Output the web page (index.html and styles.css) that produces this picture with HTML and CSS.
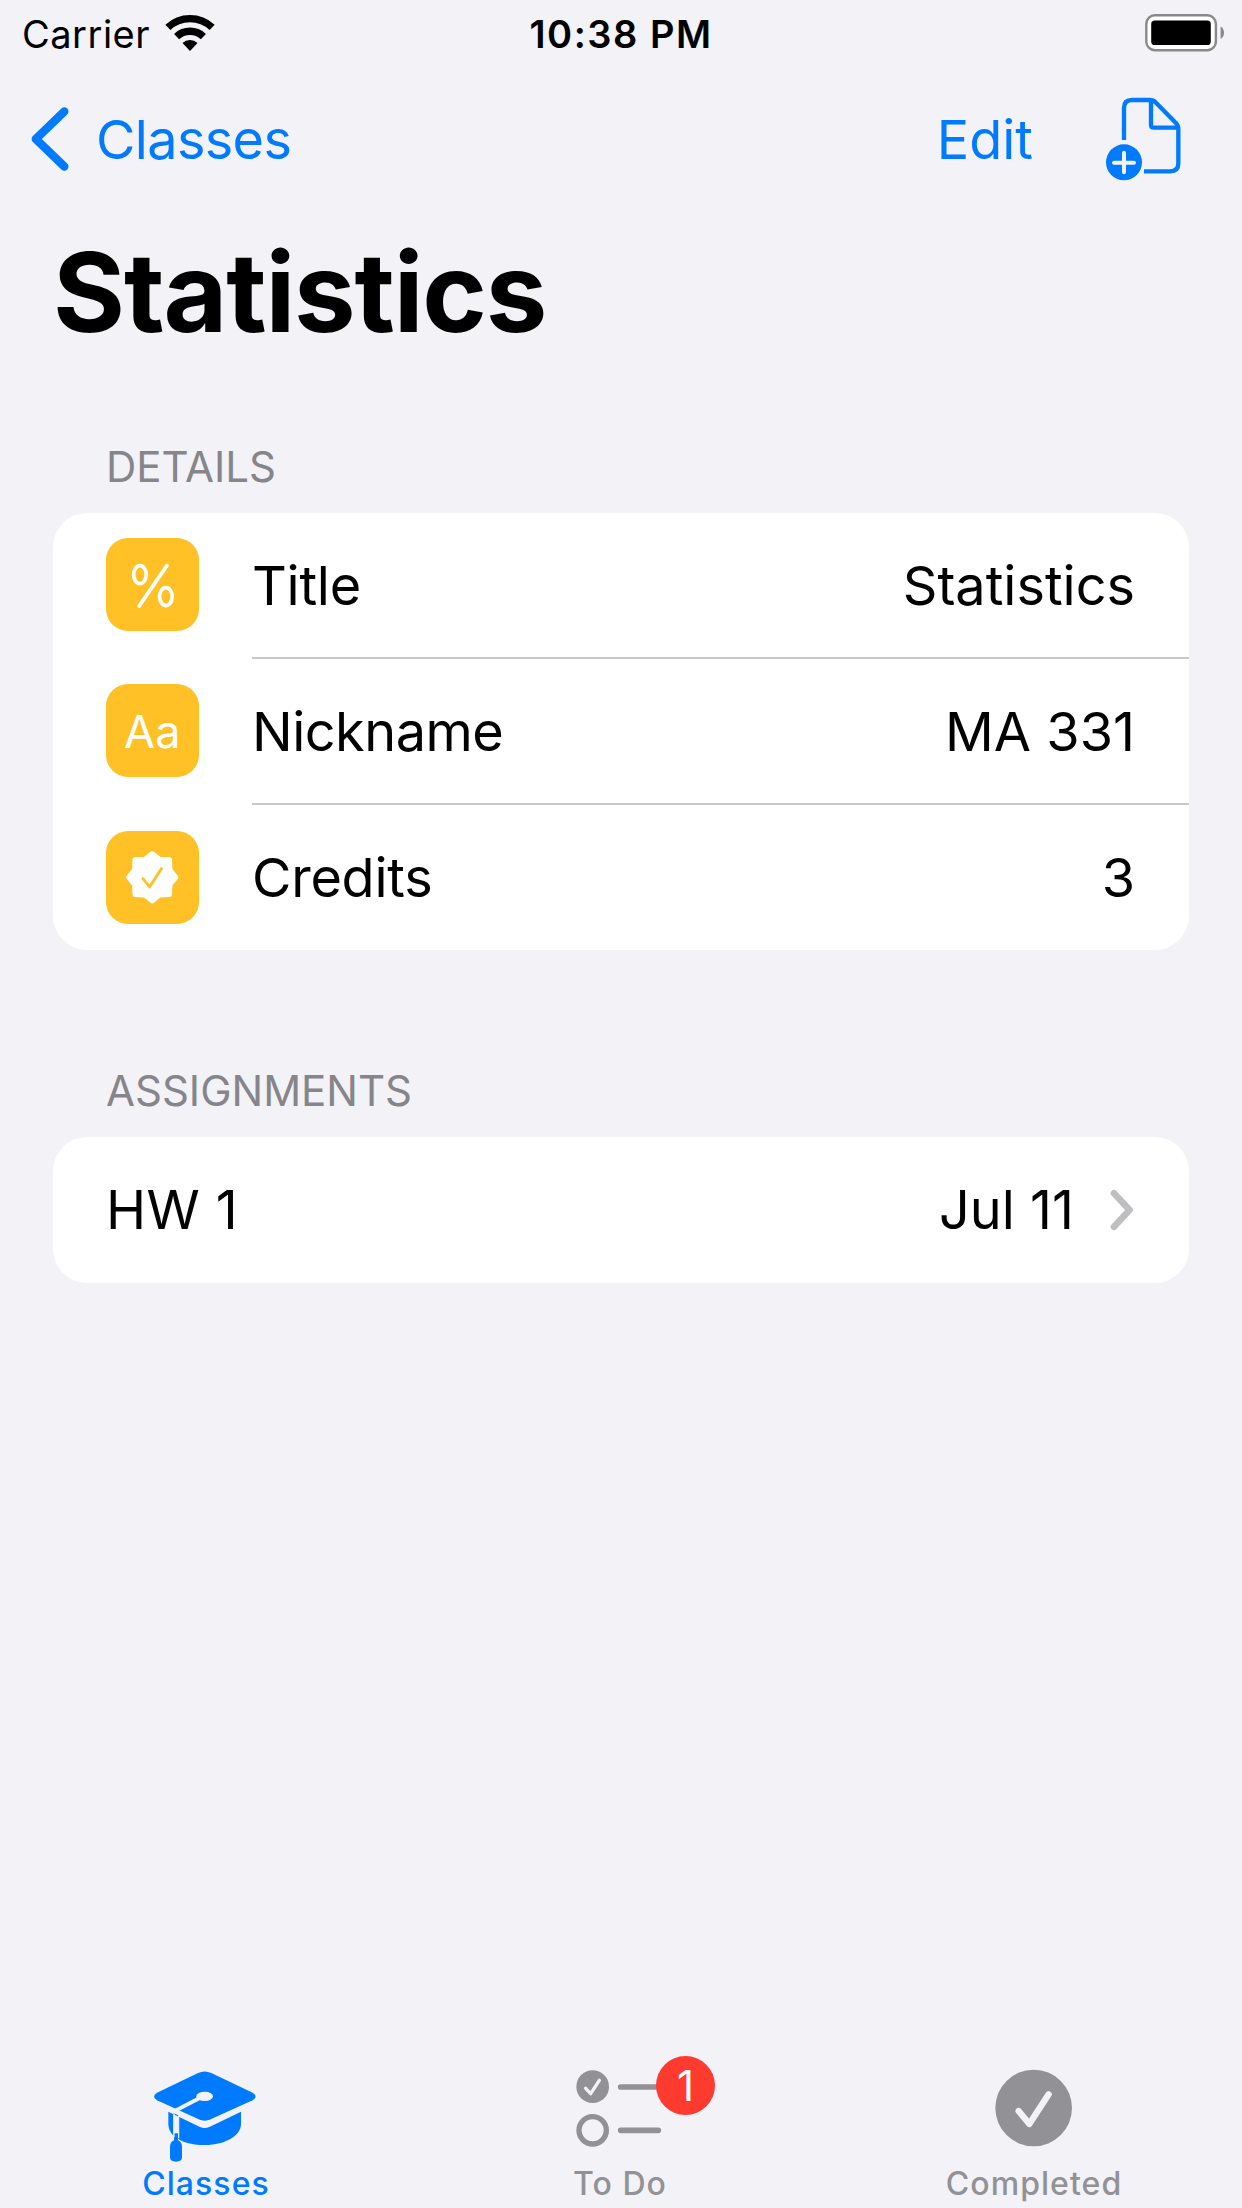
FILE: index.html
```html
<!DOCTYPE html>
<html lang="en">
<head>
<meta charset="utf-8">
<title>Statistics</title>
<link rel="stylesheet" href="styles.css">
</head>
<body>
<div class="screen">
  <div class="status-bar">
    <div class="carrier">
      <span class="carrier-name">Carrier</span>
      <svg class="wifi" viewBox="0 0 50 38" aria-hidden="true">
        <g fill="none" stroke="#000" stroke-width="7.4">
          <path d="M2.9 13.4A32.3 32.3 0 0 1 47.1 13.4"/>
          <path d="M11.6 22.6A19.6 19.6 0 0 1 38.4 22.6"/>
        </g>
        <path d="M25 37L17.5 29A11 11 0 0 1 32.5 29Z"/>
      </svg>
    </div>
    <time class="clock">10:38 PM</time>
    <svg class="battery" viewBox="0 0 80 38" aria-hidden="true">
      <rect x="1.3" y="1.3" width="69.6" height="34.9" rx="8.5" fill="#fff" stroke="#89898b" stroke-width="2.4"/>
      <rect x="6.2" y="6.4" width="59.6" height="24.6" rx="3.6"/>
      <path d="M75.6 12.6Q79 14.5 79 18.8T75.6 25Z" fill="#89898b"/>
    </svg>
  </div>

  <nav class="nav-bar">
    <a class="back">
      <svg class="back-icon" viewBox="0 0 40 66" aria-hidden="true"><path d="M34.3 5.4L5.8 33L34.3 60.6"/></svg>
      <span class="back-label">Classes</span>
    </a>
    <div class="nav-actions">
      <span class="edit">Edit</span>
      <svg class="add-doc" viewBox="618 291 228 252" aria-hidden="true">
        <g fill="none" stroke="#007aff" stroke-width="13" stroke-linejoin="round">
          <path d="M672 420V324Q672 300 696 300H749Q760 300 768 308L827 368Q835 376 835 387V490Q835 514 811 514H732"/>
          <path d="M753 303V374Q753 383 762 383H832"/>
        </g>
        <circle cx="672" cy="487" r="54" fill="#007aff"/>
        <path d="M672 458V517M642 488H702" stroke="#f2f2f7" stroke-width="12" stroke-linecap="round"/>
      </svg>
    </div>
  </nav>

  <h1 class="large-title">Statistics</h1>

  <section class="group details">
    <h2 class="group-header">Details</h2>
    <div class="card">
      <div class="row">
        <span class="tile">
          <svg viewBox="168 114 278 278" aria-hidden="true">
            <g fill="none" stroke="#fff" stroke-width="11" stroke-linecap="round">
              <ellipse cx="270" cy="224" rx="19" ry="27"/>
              <ellipse cx="348" cy="290" rx="19" ry="27"/>
              <path d="M351 197L268 318"/>
            </g>
          </svg>
        </span>
        <div class="cell divided"><span class="label">Title</span><span class="value">Statistics</span></div>
      </div>
      <div class="row row-middle">
        <span class="tile tile-text">Aa</span>
        <div class="cell divided"><span class="label label-tight">Nickname</span><span class="value">MA 331</span></div>
      </div>
      <div class="row row-last">
        <span class="tile tile-low">
          <svg viewBox="168 993 278 278" aria-hidden="true">
            <path d="M307 1062L329 1079L358 1080L359 1110L377 1132L359 1154L358 1183L329 1184L307 1202L285 1184L256 1183L255 1154L237 1132L255 1110L256 1080L285 1079Z" fill="#fff" stroke="#fff" stroke-width="17" stroke-linejoin="round"/>
            <path d="M279 1136L299 1161L335 1106" fill="none" stroke="#ffc126" stroke-width="8.5" stroke-linecap="round" stroke-linejoin="round"/>
          </svg>
        </span>
        <div class="cell"><span class="label">Credits</span><span class="value">3</span></div>
      </div>
    </div>
  </section>

  <section class="group assignments">
    <h2 class="group-header">Assignments</h2>
    <div class="card">
      <div class="row">
        <div class="cell">
          <span class="name">HW 1</span>
          <span class="due"><span>Jul 11</span>
            <svg class="chevron" viewBox="0 0 24 42" aria-hidden="true"><path d="M4 4.2L19.6 21L4 37.8"/></svg>
          </span>
        </div>
      </div>
    </div>
  </section>

  <footer class="tab-bar">
    <div class="tab active">
      <div class="tab-icon">
        <svg viewBox="-102 42 720 300" aria-hidden="true">
          <g fill="#007aff">
            <path d="M145 185L240 231Q254 237 268 231L363 185V222C363 256 318 285 254 285C222 285 194 279 175 267V196L160 189V257Q145 241 145 222Z"/>
            <path d="M234 69Q254 60 274 69L398 128Q415 139 398 151L272 208Q254 216 236 208L111 151Q94 139 111 128Z"/>
            <path d="M162 250H174V271Q186 276 186 290V322Q186 335 168 335Q150 335 150 322V290Q150 276 162 271Z"/>
          </g>
          <g fill="none" stroke="#f2f2f7">
            <path d="M245 141L164 183" stroke-width="11"/>
            <path d="M162 184V262M176 188V264" stroke-width="3.5"/>
          </g>
          <ellipse cx="254" cy="139" rx="25" ry="14" fill="#f2f2f7"/>
        </svg>
      </div>
      <span class="tab-label">Classes</span>
    </div>
    <div class="tab">
      <div class="tab-icon">
        <svg viewBox="-150 72 720 300" aria-hidden="true">
          <circle cx="128" cy="140" r="49" fill="#919196"/>
          <path d="M107 145L122 161L148 121" fill="none" stroke="#f2f2f7" stroke-width="10" stroke-linecap="round" stroke-linejoin="round"/>
          <circle cx="128" cy="271" r="41" fill="none" stroke="#919196" stroke-width="16"/>
          <path d="M212 141H326M212 271H325" stroke="#919196" stroke-width="17" stroke-linecap="round"/>
        </svg>
        <span class="badge">1</span>
      </div>
      <span class="tab-label">To Do</span>
    </div>
    <div class="tab">
      <div class="tab-icon">
        <svg viewBox="-18 72 720 300" aria-hidden="true">
          <circle cx="341" cy="204" r="115" fill="#919196"/>
          <path d="M296 213L328 252L386 163" fill="none" stroke="#f2f2f7" stroke-width="19" stroke-linecap="round" stroke-linejoin="round"/>
        </svg>
      </div>
      <span class="tab-label">Completed</span>
    </div>
  </footer>
</div>
</body>
</html>
```
FILE: styles.css
```css
* { box-sizing: border-box; }

body {
  margin: 0;
  background: #f2f2f7;
  color: #000;
  font-family: Inter, "Liberation Sans", sans-serif;
  font-size: 54px;
}

svg { display: block; }
h1, h2 { margin: 0; }
span, time { white-space: nowrap; }

.screen {
  width: 1242px;
  height: 2208px;
  display: flex;
  flex-direction: column;
}

/* Status bar */
.status-bar {
  height: 66px;
  display: grid;
  grid-template-columns: 1fr auto 1fr;
  padding: 0 17px;
  line-height: 68px;
}
.carrier { display: flex; padding-left: 5px; }
.carrier-name { font-size: 38px; letter-spacing: 0.5px; width: 143px; }
.wifi { width: 50px; height: 38px; margin-top: 14px; }
.clock { font-size: 38px; font-weight: 600; letter-spacing: 1.5px; }
.battery { width: 80px; height: 38px; margin-top: 13.5px; justify-self: end; }

/* Navigation bar */
.nav-bar {
  height: 146px;
  display: flex;
  justify-content: space-between;
  align-items: center;
  padding: 0 60px 0 30px;
  color: #007aff;
}
.back { display: flex; align-items: center; gap: 26px; }
.back-label { letter-spacing: -0.65px; }
.back-icon { width: 40px; height: 66px; }
.back-icon path { fill: none; stroke: #007aff; stroke-width: 8.4; stroke-linecap: round; stroke-linejoin: round; }
.nav-actions { display: flex; align-items: center; gap: 73px; }
.add-doc { width: 76px; height: 84px; }

.large-title {
  height: 158px;
  padding-left: 53px;
  font-size: 110px;
  font-weight: 700;
  letter-spacing: -1.15px;
  line-height: 160px;
}

/* Grouped lists */
.group { padding: 0 53px; }
.details { margin-top: 66px; }
.assignments { margin-top: 110px; }
.group-header {
  height: 77px;
  padding-left: 53px;
  color: #85858a;
  font-size: 42px;
  font-weight: 400;
  line-height: 62px;
  text-transform: uppercase;
}
.card { background: #fff; border-radius: 34px; padding-left: 53px; width: 1136px; }
.row { display: flex; align-items: center; height: 145.67px; }
.row-middle { height: 146.33px; }
.row-last { height: 145px; }
.tile {
  width: 92.5px;
  height: 92.5px;
  margin: -3px 53.5px 0 0;
  flex: none;
  border-radius: 22px;
  background: #ffc126;
  color: #fff;
}
.tile-text { font-size: 45px; line-height: 96px; text-align: center; }
.tile-low { margin-top: 0; }
.cell {
  flex: 1;
  height: 100%;
  display: flex;
  align-items: center;
  justify-content: space-between;
  padding-right: 54px;
}
.label { letter-spacing: -0.25px; }
.label-tight { letter-spacing: -0.5px; }
.name { letter-spacing: 0.4px; }
.divided { box-shadow: inset 0 -2px #c8c8ca; }
.due { display: flex; align-items: center; gap: 36px; padding-right: 1px; }
.chevron { width: 24px; height: 42px; }
.chevron path { fill: none; stroke: #bfbfc1; stroke-width: 6.6; stroke-linecap: round; stroke-linejoin: round; }

/* Tab bar */
.tab-bar {
  margin-top: auto;
  height: 144px;
  display: grid;
  grid-template-columns: repeat(3, 414px);
  margin-left: -1px;
}
.tab { display: flex; flex-direction: column; align-items: center; color: #919196; }
.tab.active { color: #007aff; }
.tab-icon { position: relative; width: 240px; height: 100px; }
.tab-icon svg { width: 240px; height: 100px; }
.tab-label { font-size: 32px; font-weight: 500; letter-spacing: 1.05px; line-height: 40px; }
.badge {
  position: absolute;
  left: 156px;
  top: -8px;
  width: 59px;
  height: 59px;
  border-radius: 50%;
  background: #ff3b30;
  color: #fff;
  font-size: 42px;
  line-height: 59px;
  text-align: center;
}
```
